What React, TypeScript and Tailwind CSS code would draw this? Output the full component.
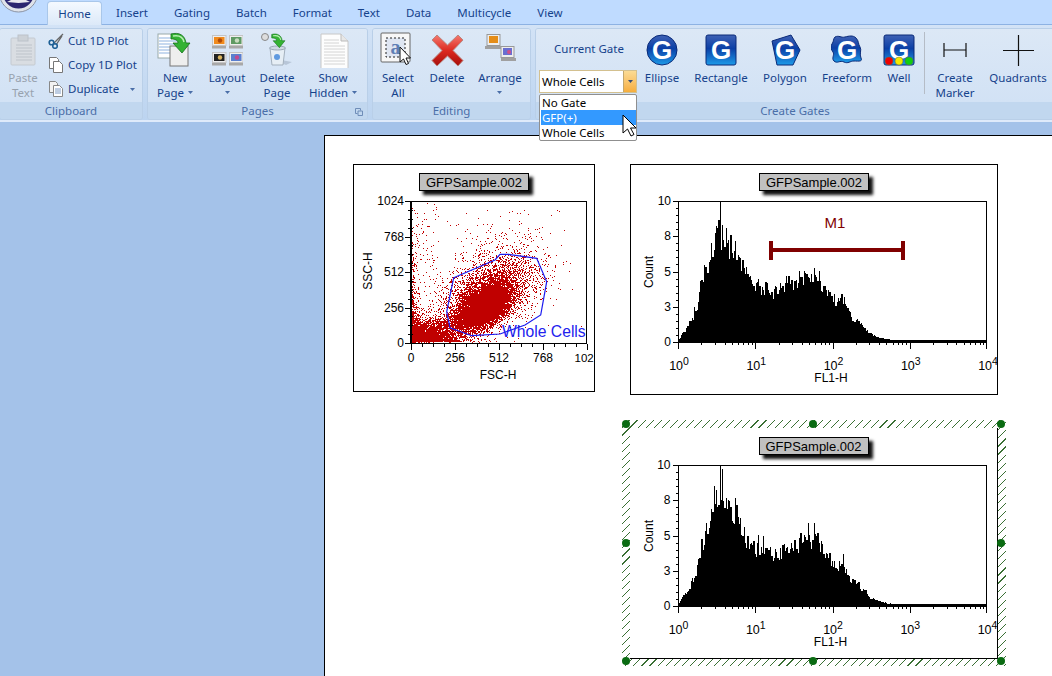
import type { ReactNode } from "react";

function rng(seed: number) {
  let a = seed;
  return () => {
    a |= 0;
    a = (a + 0x6d2b79f5) | 0;
    let t = Math.imul(a ^ (a >>> 15), 1 | a);
    t = (t + Math.imul(t ^ (t >>> 7), 61 | t)) ^ t;
    return ((t ^ (t >>> 14)) >>> 0) / 4294967296;
  };
}

function scatterPath() {
  const r = rng(7);
  const u = () => Math.max(r(), 1e-6);
  const g = () => Math.sqrt(-2 * Math.log(u())) * Math.cos(6.283 * r());
  const e = () => -Math.log(u());
  const pts: string[] = [];
  const put = (x: number, y: number) => {
    if (x < 0 || x >= 176 || y < 0 || y >= 142) return;
    pts.push(`M${Math.floor(x)} ${Math.floor(y) + 0.5}h1`);
  };
  for (let i = 0; i < 9000; i++) {
    const a = g();
    put(74 + a * 10 + g() * 7, 105 - a * 6 + g() * 9);
  }
  for (let i = 0; i < 3000; i++) {
    const a = g();
    put(80 + a * 22 + g() * 10, 90 - a * 8 + g() * 17);
  }
  for (let i = 0; i < 380; i++) put(90 + g() * 28, 62 + g() * 26);
  for (let i = 0; i < 5000; i++) put(e() * 12, 141 - e() * 6);
  for (let i = 0; i < 1500; i++) {
    const t = r();
    put(8 + 55 * t + g() * 8, 137 - 20 * t + g() * 6);
  }
  for (let i = 0; i < 450; i++) put(e() * 2, 142 - r() * r() * 142);
  for (let i = 0; i < 110; i++) put(r() * 28, r() * 115);
  return pts.join("");
}

const ENV: [number, number][] = [
  [0, 0.2], [8, 1.1], [17, 2.3], [23, 4.6], [30, 6.3], [35, 8], [42, 8.1], [48, 7.9], [55, 6.6], [62, 6],
  [70, 4.6], [82, 4.1], [95, 3.8], [108, 4.2], [125, 5], [138, 5], [147, 4.2], [155, 3.2], [165, 3], [172, 2],
  [182, 1.4], [192, 0.6], [205, 0.25], [218, 0.1], [228, 0.05], [309, 0.04],
];

function histPath(seed: number) {
  const r = rng(seed);
  const bins: number[] = [];
  for (let b = 0; b < 256; b++) {
    const x = b * 1.207;
    const i = ENV.findIndex((p) => p[0] > x);
    const [x0, y0] = ENV[i - 1];
    const [x1, y1] = ENV[i];
    const env = y0 + ((y1 - y0) * (x - x0)) / (x1 - x0);
    let v = env * (0.78 + r() * 0.3);
    if (r() > 0.88) v += env * 0.16;
    if (x > 228) v = 0;
    bins.push(v);
  }
  let d = "";
  for (let x = 0; x < 309; x++) {
    const v = x === 42 ? 10 : bins[Math.floor(x / 1.207)];
    if (v > 0) d += `M${x + 0.5} 141V${141 - v * 14.1}`;
  }
  return d;
}

const SCATTER = scatterPath();
const HIST_A = histPath(21);
const HIST_B = histPath(58);

function LogAxis() {
  const ticks: ReactNode[] = [];
  for (let d = 0; d < 4; d++) {
    for (let m = 1; m < 10; m++) {
      const x = Math.round((d + Math.log10(m)) * 77.25) + 0.5;
      ticks.push(<path key={`${d}-${m}`} d={`M${x} 141v${m === 1 ? 7 : 3}`} stroke="#000" />);
    }
  }
  ticks.push(<path key="end" d="M308.5 141v7" stroke="#000" />);
  return <>{ticks}</>;
}

function Histogram({ path, marker }: { path: string; marker?: boolean }) {
  const ylabels: [string, number][] = [["10", 0], ["8", 35], ["5", 70.5], ["3", 106], ["0", 141]];
  const decades = [0, 1, 2, 3, 4];
  const minor = Array.from({ length: 21 }, (_, i) => i * 7.05);
  return (
    <svg className="block w-full flex-1 font-['Liberation_Sans',Arial,sans-serif]" viewBox="0 0 366 203" width={366} height={203} shapeRendering="crispEdges">
      <g transform="translate(47,10)">
        <rect x="0.5" y="0.5" width="308" height="140.5" fill="#fff" stroke="#000" />
        <path d={path} stroke="#000" fill="none" />
        <rect x="0" y="139" width="309" height="2" fill="#000" />
        <LogAxis />
        {minor.map((y) => (
          <path key={y} d={`M-2 ${Math.round(y) + 0.5}h2`} stroke="#000" />
        ))}
        {ylabels.map(([t, y]) => (
          <path key={t} d={`M-5 ${Math.round(y) + 0.5}h5`} stroke="#000" />
        ))}
        {marker && (
          <g fill="#800000">
            <rect x="92" y="47" width="133" height="4" />
            <rect x="91" y="40" width="4" height="19" />
            <rect x="223" y="40" width="4" height="19" />
          </g>
        )}
      </g>
      <g shapeRendering="auto">
        {marker && (
          <text x="204" y="37" fontSize="15" fill="#800000" textAnchor="middle">M1</text>
        )}
        {ylabels.map(([t, y]) => (
          <text key={t} x="40" y={y + 14} fontSize="12" textAnchor="end">{t}</text>
        ))}
        {decades.map((d) => (
          <text key={d} x={48 + d * 77.25} y="178.500" fontSize="12.5" textAnchor="middle">
            10<tspan dy="-5" fontSize="10.5">{d}</tspan>
          </text>
        ))}
        <text x="200" y="191" fontSize="12" textAnchor="middle">FL1-H</text>
        <text transform="translate(22,81) rotate(-90)" fontSize="12" textAnchor="middle">Count</text>
      </g>
    </svg>
  );
}

function Scatter() {
  const yl: [string, number][] = [["1024", 0], ["768", 35.5], ["512", 71], ["256", 106.5], ["0", 142]];
  const xl: [string, number][] = [["0", 0], ["256", 44], ["512", 88], ["768", 132]];
  const yMinor = Array.from({ length: 17 }, (_, i) => i * 8.875);
  const xMinor = Array.from({ length: 17 }, (_, i) => i * 11);
  return (
    <svg className="block w-full flex-1 font-['Liberation_Sans',Arial,sans-serif]" viewBox="0 0 240 200" width={240} height={200} shapeRendering="crispEdges">
      <g transform="translate(57,10)">
        <rect x="0.5" y="0.5" width="175" height="142" fill="#fff" stroke="#000" />
        <path d={SCATTER} stroke="#c00000" fill="none" />
        <rect x="-1" y="0" width="2" height="143" fill="#000" />
        {xMinor.map((x, i) => (
          <path key={x} d={`M${Math.round(x) + 0.5} 143v${i % 4 === 0 ? 6 : 3}`} stroke="#000" />
        ))}
        {yMinor.map((y, i) => (
          <path key={y} d={`M${i % 4 === 0 ? -6 : -3} ${Math.round(y) + 0.5}h5`} stroke="#000" />
        ))}
      </g>
      <polygon
        shapeRendering="auto"
        points="99.7,86.7 141,69 146,63.3 154.3,63.3 182.7,67.3 192.7,90.7 186.7,124 171,134 146,143 117.7,144.7 96,136.7 92.7,120.7"
        fill="none"
        stroke="#1a1af0"
        strokeWidth="1.2"
      />
      <g shapeRendering="auto">
        <text x="148" y="146" fontSize="15.7" fill="#2222ee">Whole Cells</text>
        {yl.map(([t, y]) => (
          <text key={t} x="50" y={y + 14} fontSize="12" textAnchor="end">{t}</text>
        ))}
        {xl.map(([t, x]) => (
          <text key={t} x={57 + x} y="171" fontSize="12" textAnchor="middle">{t}</text>
        ))}
        <text x="220.500" y="171" fontSize="11.5">102</text>
        <text x="144" y="188" fontSize="12" textAnchor="middle">FSC-H</text>
        <text transform="translate(18,80) rotate(-90)" fontSize="12" textAnchor="middle">SSC-H</text>
      </g>
    </svg>
  );
}

function Chip() {
  return (
    <div className="flex h-[18px] w-[110px] shrink-0 items-center justify-center border border-black bg-[#c0c0c0] text-[13px] leading-none text-black shadow-[4px_4px_3px_#111] font-['Liberation_Sans',Arial,sans-serif]">
      GFPSample.002
    </div>
  );
}

function SelectionHandles() {
  const spots = [
    "left-[-8px] top-[-8px]", "left-[179px] top-[-8px]", "left-[367px] top-[-8px]",
    "left-[-8px] top-[111px]", "left-[367px] top-[111px]",
    "left-[-8px] top-[229px]", "left-[179px] top-[229px]", "left-[367px] top-[229px]",
  ];
  return (
    <>
      {spots.map((s) => (
        <span key={s} className={`absolute h-[8px] w-[8px] rounded-full bg-[#0a6b12] ${s}`} />
      ))}
    </>
  );
}

function Caret({ className = "" }: { className?: string }) {
  return (
    <svg className={`inline-block ${className}`} width="5" height="3" viewBox="0 0 5 3">
      <path d="M0 0h5L2.5 3z" fill="#4a6ea8" />
    </svg>
  );
}

function Page() {
  return (
    <>
      <path d="M6 2h20l7 7v28H6z" fill="#fdfdfd" stroke="#c8c8c8" />
      <path d="M26 2v7h7" fill="#e8e8e8" stroke="#bbb" />
      <path d="M9 8h15M9 11h15M9 14h21M9 17h21M9 20h21M9 23h21M9 26h21M9 29h21M9 32h21" stroke="#d4d4d4" />
    </>
  );
}

function GreenArrow({ x = 0, y = 0, s = 1 }: { x?: number; y?: number; s?: number }) {
  return (
    <g transform={`translate(${x},${y}) scale(${s})`}>
      <path d="M1 2c8-2 14 1 15 9h4l-8 10-9-10h5c0-3-3-4-7-4z" fill="#34b233" stroke="#14701c" strokeWidth="0.8" />
      <path d="M3 4c6-1 10 1 11 6" fill="none" stroke="#b6efb0" strokeWidth="1.5" />
    </g>
  );
}

function NewPageIcon() {
  return (
    <svg width="36" height="36" viewBox="0 0 36 36">
      <rect x="1" y="2" width="21" height="24" fill="#fff" stroke="#9aa" />
      <path d="M2 6h19M2 9h19M2 12h19M2 15h19M2 18h19M2 21h19" stroke="#8fb3e0" />
      <rect x="13" y="14" width="18" height="20" fill="#eee" stroke="#777" />
      <GreenArrow x={13} y={0} s={1} />
    </svg>
  );
}

function LayoutIcon() {
  const cells: [number, number, string, string][] = [
    [0, 0, "#f08a1c", "#b04a08"], [17, 0, "#5f9a63", "#c8dcc0"], [0, 17, "#222", "#d9b35c"], [17, 17, "#5a7fcf", "#c04a90"],
  ];
  return (
    <svg width="31" height="31" viewBox="0 0 31 31">
      {cells.map(([x, y, a, b]) => (
        <g key={`${x}-${y}`}>
          <rect x={x + 0.5} y={y + 0.5} width="13.5" height="10" fill="#eee" stroke="#c4c4c4" />
          <rect x={x + 2} y={y + 2} width="10.5" height="7" fill={a} />
          <circle cx={x + 8} cy={y + 5.5} r="2.2" fill={b} />
          <rect x={x} y={y + 11} width="14" height="2.500" fill="#a8a8a8" />
        </g>
      ))}
    </svg>
  );
}

function DeleteIcon() {
  return (
    <svg width="34" height="36" viewBox="0 0 34 36">
      <circle cx="5" cy="5" r="3.5" fill="#ddd" stroke="#888" />
      <path d="M10 26l16 7 6-3z" fill="#b8c6d8" />
      <path d="M10 16h15l-2 17H12z" fill="#e6eef5" stroke="#a3b0bd" />
      <ellipse cx="17.5" cy="16" rx="8" ry="2" fill="#cdd8e3" stroke="#9aa7b5" />
      <circle cx="17" cy="25" r="3" fill="#5f9ae0" />
      <GreenArrow x={11} y={1} s={0.7} />
    </svg>
  );
}

function SelectAllIcon() {
  return (
    <svg width="36" height="36" viewBox="0 0 36 36">
      <rect x="1" y="1" width="29" height="29" rx="1" fill="#f7f7f7" stroke="#666" />
      <rect x="6" y="6" width="19" height="19" fill="#dfe6f2" stroke="#222" strokeDasharray="2 2" />
      <text x="15.5" y="22" textAnchor="middle" fontSize="20" fontWeight="700" fill="#5f7fb5" fontFamily="'Liberation Serif',serif">a</text>
      <path d="M20 15v15l3.5-3 2.5 5.500 2.500-1-2.500-5.500h4.500z" fill="#fff" stroke="#111" />
    </svg>
  );
}

function BigX() {
  return (
    <svg width="33" height="33" viewBox="0 0 33 33">
      <defs>
        <linearGradient id="xred" x1="0" y1="0" x2="0" y2="1">
          <stop offset="0" stopColor="#f47a70" />
          <stop offset="0.5" stopColor="#dd2a20" />
          <stop offset="1" stopColor="#a50f0c" />
        </linearGradient>
      </defs>
      <path d="M6 1L16.500 11 27 1l5 5-10 10.500 10 10-5 5.500-10.500-10L6 32l-5-5.500 10-10L1 6z" fill="url(#xred)" stroke="#b9867f" />
    </svg>
  );
}

function ArrangeIcon() {
  return (
    <svg width="33" height="32" viewBox="0 0 33 32">
      <rect x="3" y="0.500" width="13" height="11" fill="#eee" stroke="#999" />
      <rect x="5" y="2" width="9" height="7" fill="#e58d18" />
      <rect x="1" y="12" width="16" height="3" fill="#a0a0a0" />
      <rect x="17" y="12.500" width="13" height="11" fill="#eee" stroke="#999" />
      <rect x="19" y="14" width="9" height="7" fill="#6a6fd0" />
      <circle cx="25" cy="18" r="2" fill="#d0508a" />
      <rect x="17" y="24" width="15" height="3" fill="#a0a0a0" />
    </svg>
  );
}

const G_SHAPES: Record<string, ReactNode> = {
  ellipse: <circle cx="16" cy="16" r="15" fill="url(#gblue)" stroke="#0a2a78" />,
  rect: <rect x="1" y="1" width="30" height="30" rx="2" fill="url(#gblue)" stroke="#0a2a78" />,
  polygon: <path d="M3 7L22 1l9 15-7 15H8z" fill="url(#gblue)" stroke="#0a2a78" />,
  freeform: <path d="M4 3c4-2 6 1 10 0s8-2 11 1 2 6 4 9-1 7 1 11-3 3-7 3-6 3-10 1-7 2-10-1 1-6-1-9-3-5-1-8 1-5 3-7z" fill="url(#gblue)" stroke="#0a2a78" />,
};

function GIcon({ kind }: { kind: "ellipse" | "rect" | "polygon" | "freeform" | "well" }) {
  return (
    <svg width="32" height="33" viewBox="0 0 32 33">
      <defs>
        <linearGradient id="gblue" x1="0" y1="0" x2="0" y2="1">
          <stop offset="0" stopColor="#3f62b5" />
          <stop offset="0.45" stopColor="#0b3fa6" />
          <stop offset="1" stopColor="#1d9be8" />
        </linearGradient>
      </defs>
      {G_SHAPES[kind === "well" ? "rect" : kind]}
      <text x="16" y="25" textAnchor="middle" fontSize="26" fontWeight="700" fill="#fff" fontFamily="'Liberation Sans',Arial,sans-serif">G</text>
      {kind === "well" && (
        <g stroke="#664" strokeWidth="0.5">
          <circle cx="6" cy="27" r="4" fill="#f00000" />
          <circle cx="16" cy="27" r="4" fill="#f4ea00" />
          <circle cx="26" cy="27" r="4" fill="#10d010" />
        </g>
      )}
    </svg>
  );
}

function BigButton({ w, icon, lines, caret, grey }: { w: string; icon: ReactNode; lines: string[]; caret?: "inline" | "below"; grey?: boolean }) {
  return (
    <div className={`flex shrink-0 flex-col items-center ${w}`}>
      <div className="flex h-[38px] items-center justify-center pb-[2px]">{icon}</div>
      <div className={`text-center leading-[15px] ${grey ? "text-[#98a2ae]" : "text-[#15428b]"}`}>
        {lines.map((l, i) => (
          <div key={l} className="whitespace-nowrap">
            {l}
            {caret === "inline" && i === lines.length - 1 && <Caret className="ml-1 mb-[2px]" />}
          </div>
        ))}
        {caret === "below" && (
          <div className="flex h-[15px] items-center justify-center">
            <Caret />
          </div>
        )}
      </div>
    </div>
  );
}

function SmallButton({ icon, label, caret }: { icon: ReactNode; label: string; caret?: boolean }) {
  return (
    <div className="flex h-[24px] items-center gap-[3px] whitespace-nowrap text-[#15428b]">
      <div className="flex w-[19px] justify-center">{icon}</div>
      {label}
      {caret && <Caret className="ml-2" />}
    </div>
  );
}

function Group({ label, className, inner = "", corner, children }: { label: string; className: string; inner?: string; corner?: boolean; children: ReactNode }) {
  return (
    <div className={`relative flex shrink-0 flex-col overflow-hidden rounded-[3px] border border-[#b9cfe8] ${className}`}>
      <div className={`flex h-[73px] bg-gradient-to-b from-[#dce8f6] to-[#d2e2f5] pt-[3px] ${inner}`}>{children}</div>
      <div className="flex h-[17px] items-center justify-center bg-[#c1d7ef] text-[#4a6ea8]">{label}</div>
      {corner && (
        <svg className="absolute bottom-[3px] right-[4px]" width="8" height="8" viewBox="0 0 8 8">
          <path d="M.5.500h5v2M.5.500v5h2M3 3h4.500v4.500H3z" fill="none" stroke="#6f8db8" />
        </svg>
      )}
    </div>
  );
}

function Ribbon() {
  const tabs = ["Insert", "Gating", "Batch", "Format", "Text", "Data", "Multicycle", "View"];
  return (
    <div className="relative h-[122px] shrink-0 bg-[#bfdbff] font-['Noto_Sans',sans-serif] text-[11.5px]">
      <svg className="absolute left-0 top-0" width="40" height="14" viewBox="0 0 40 14">
        <circle cx="18.500" cy="-7" r="19" fill="#dfe3ea" stroke="#8c93a3" />
        <circle cx="18.500" cy="-7" r="15.500" fill="#2a2470" />
        <path d="M7 2l8-4 3.500-6 3.500 6 8 4-11.500 1z" fill="#e8e8ef" />
      </svg>
      <div className="flex h-[25px] items-end border-b border-[#8db2e3] pl-[47px] text-[#15428b]">
        <div className="mb-[-1px] flex h-[24px] w-[55px] items-center justify-center rounded-t-[4px] border border-b-0 border-[#a9c7ea] bg-gradient-to-b from-[#f4f9ff] to-[#dce9f8]">
          Home
        </div>
        <div className="flex h-[23px] items-center gap-[26px] pl-[14px]">
          {tabs.map((t) => (
            <span key={t}>{t}</span>
          ))}
        </div>
      </div>
      <div className="flex h-[97px] gap-[4px] border-b-2 border-[#dfeafa] bg-gradient-to-b from-[#d3e3f6] to-[#bcd4f0] pt-[3px]">
        <Group label="Clipboard" className="ml-[-1px] w-[144px]">
          <BigButton
            w="w-[46px]"
            grey
            lines={["Paste", "Text"]}
            icon={
              <svg width="28" height="32" viewBox="0 0 28 32">
                <rect x="2" y="4" width="24" height="27" rx="1" fill="#d9dde2" stroke="#c4cad1" />
                <rect x="9" y="1" width="10" height="6" fill="#ccd1d7" stroke="#bcc2c9" />
                <path d="M7 11h16M7 14h16M7 17h16M7 20h16M7 23h16M7 26h16" stroke="#bdc3ca" />
              </svg>
            }
          />
          <div className="mt-[-3px] flex flex-col">
            <SmallButton
              label="Cut 1D Plot"
              icon={
                <svg width="16" height="16" viewBox="0 0 16 16">
                  <path d="M6 10l9-9M8 12l6-9" stroke="#666" strokeWidth="1.300" />
                  <circle cx="3.500" cy="9.500" r="2.300" fill="none" stroke="#1d5f95" strokeWidth="1.600" />
                  <circle cx="7" cy="13" r="2.300" fill="none" stroke="#1d5f95" strokeWidth="1.600" />
                </svg>
              }
            />
            <SmallButton
              label="Copy 1D Plot"
              icon={
                <svg width="14" height="16" viewBox="0 0 14 16">
                  <path d="M.5.500h7l2 2v9h-9z" fill="#fff" stroke="#777" />
                  <path d="M4.500 4.500h6l3 3v8h-9z" fill="#fff" stroke="#777" />
                </svg>
              }
            />
            <SmallButton
              label="Duplicate"
              caret
              icon={
                <svg width="14" height="16" viewBox="0 0 14 16">
                  <path d="M.5.500h6l2 2v9h-8z" fill="#f2f2f2" stroke="#888" />
                  <path d="M4.500 4.500h6l3 3v8h-9z" fill="#fff" stroke="#888" />
                  <path d="M6 8h6M6 10h6M6 12h6" stroke="#7f9cc5" />
                </svg>
              }
            />
          </div>
        </Group>
        <Group label="Pages" className="w-[221px]" inner="pl-px" corner>
          <BigButton w="w-[52px]" icon={<NewPageIcon />} lines={["New", "Page"]} caret="inline" />
          <BigButton w="w-[52px]" icon={<LayoutIcon />} lines={["Layout"]} caret="below" />
          <BigButton w="w-[48px]" icon={<DeleteIcon />} lines={["Delete", "Page"]} />
          <BigButton
            w="w-[64px]"
            lines={["Show", "Hidden"]}
            caret="inline"
            icon={
              <svg width="36" height="36" viewBox="0 0 36 36">
                <Page />
              </svg>
            }
          />
        </Group>
        <Group label="Editing" className="w-[159px]">
          <BigButton w="w-[50px]" icon={<SelectAllIcon />} lines={["Select", "All"]} />
          <BigButton w="w-[48px]" icon={<BigX />} lines={["Delete"]} />
          <BigButton w="w-[58px]" icon={<ArrangeIcon />} lines={["Arrange"]} caret="below" />
        </Group>
        <Group label="Create Gates" className="w-[520px]">
          <div className="relative ml-[3px] w-[98px] shrink-0">
            <div className="flex h-[38px] items-center justify-center pb-[4px] pl-[2px] text-[#15428b]">Current Gate</div>
            <div className="flex h-[23px] border border-[#d3c08f] bg-white">
              <div className="flex flex-1 items-center pl-[2px] text-black">Whole Cells</div>
              <div className="flex w-[13px] items-center justify-center border-l border-[#c2a76f] bg-gradient-to-b from-[#fbdb94] to-[#f6ae3c]">
                <svg width="5" height="3" viewBox="0 0 5 3">
                  <path d="M0 0h5L2.500 3z" fill="#3b4f75" />
                </svg>
              </div>
            </div>
          </div>
          <BigButton w="w-[50px]" icon={<GIcon kind="ellipse" />} lines={["Ellipse"]} />
          <BigButton w="w-[68px]" icon={<GIcon kind="rect" />} lines={["Rectangle"]} />
          <BigButton w="w-[60px]" icon={<GIcon kind="polygon" />} lines={["Polygon"]} />
          <BigButton w="w-[64px]" icon={<GIcon kind="freeform" />} lines={["Freeform"]} />
          <BigButton w="w-[40px]" icon={<GIcon kind="well" />} lines={["Well"]} />
          <div className="ml-[5px] h-[62px] w-px bg-[#b5bcc6]" />
          <BigButton
            w="w-[60px]"
            lines={["Create", "Marker"]}
            icon={
              <svg width="24" height="16" viewBox="0 0 24 16">
                <path d="M1 1v14M23 1v14M1 8h22" stroke="#111" strokeWidth="1.200" fill="none" />
              </svg>
            }
          />
          <BigButton
            w="w-[66px]"
            lines={["Quadrants"]}
            icon={
              <svg width="33" height="33" viewBox="0 0 33 33">
                <path d="M16.500 1v31M1 16.500h31" stroke="#111" strokeWidth="1.200" fill="none" />
              </svg>
            }
          />
        </Group>
      </div>
      <div className="absolute left-[539px] top-[94px] z-10 flex h-[47px] w-[98px] flex-col rounded-[2px] border border-[#8f8f8f] bg-white pl-px text-black">
        <div className="flex h-[15px] items-center pl-[1px]">No Gate</div>
        <div className="flex h-[15px] items-center bg-[#3399ff] pl-[1px] text-white">GFP(+)</div>
        <div className="flex h-[15px] items-center pl-[1px]">Whole Cells</div>
      </div>
      <svg className="absolute left-[622px] top-[114px] z-20" width="15" height="23" viewBox="0 0 15 23">
        <path d="M1 1v18l4.500-4 3.500 7 3-1.500-3.500-6.500H14z" fill="#fff" stroke="#000" />
      </svg>
    </div>
  );
}

export default function App() {
  return (
    <div className="flex h-[676px] w-[1052px] flex-col overflow-hidden bg-[#a4c2e9]">
      <Ribbon />
      <div className="flex flex-1 pl-[324px] pt-[13px]">
        <div className="flex-1 border-l border-t border-black bg-white pl-[28px] pt-[28px]">
          <div className="grid grid-cols-[242px_368px] gap-x-[35px] gap-y-[33px]">
            <div className="flex h-[228px] flex-col items-center border border-black bg-white pt-2">
              <Chip />
              <Scatter />
            </div>
            <div className="flex h-[231px] flex-col items-center border border-black bg-white pt-2">
              <Chip />
              <Histogram path={HIST_A} marker />
            </div>
            <div className="relative col-start-2 h-[231px] w-[368px]">
              <div className="absolute inset-x-[-8px] bottom-[-7px] top-[-8px] bg-[repeating-linear-gradient(135deg,#ffffff_0,#ffffff_4.900px,#3a7034_4.900px,#3a7034_5.700px)]" />
              <div className="relative flex h-full flex-col items-center border-b border-r border-black bg-white pt-[9px]">
                <Chip />
                <Histogram path={HIST_B} />
              </div>
              <SelectionHandles />
            </div>
          </div>
        </div>
      </div>
    </div>
  );
}
